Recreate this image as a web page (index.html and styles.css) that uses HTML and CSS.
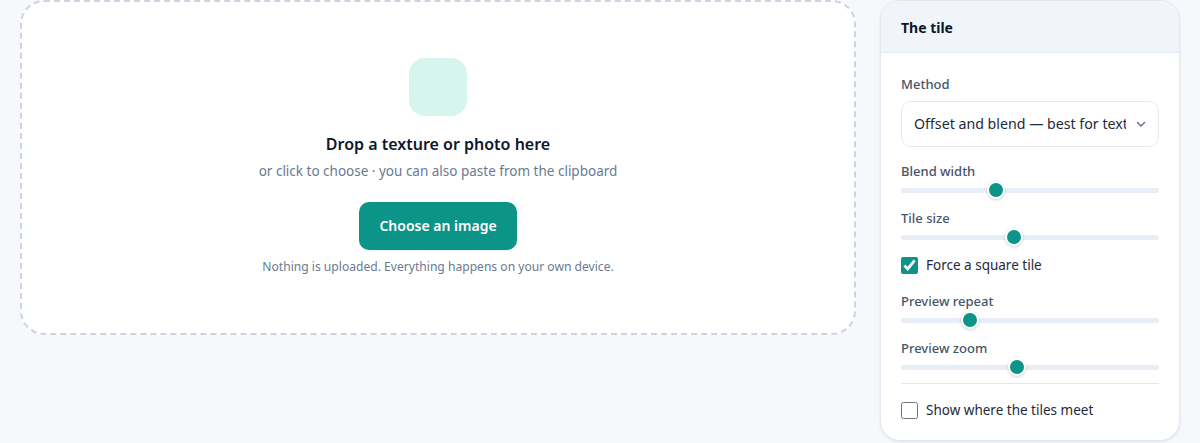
FILE: index.html
```html
<!DOCTYPE html>
<html lang="en">
<head>
<meta charset="utf-8">
<title>The tile</title>
<link rel="stylesheet" href="styles.css">
</head>
<body>
<main class="layout">
  <section class="drop">
    <div class="drop-icon"></div>
    <h2 class="drop-title">Drop a texture or photo here</h2>
    <p class="drop-sub">or click to choose · you can also paste from the clipboard</p>
    <button class="btn" type="button">Choose an image</button>
    <p class="drop-note">Nothing is uploaded. Everything happens on your own device.</p>
  </section>
  <aside class="panel">
    <header class="panel-head">The tile</header>
    <div class="panel-body">
      <div class="field method">
        <label class="label" for="m">Method</label>
        <div class="select-wrap">
          <select id="m" class="select"><option>Offset and blend — best for textures</option></select>
          <svg class="chev" viewBox="0 0 12 12" width="12" height="12" aria-hidden="true"><path d="M2.5 4.5 6 8l3.5-3.5" fill="none" stroke="#64748b" stroke-width="1.5" stroke-linecap="round" stroke-linejoin="round"/></svg>
        </div>
      </div>
      <div class="field">
        <label class="label">Blend width</label>
        <input class="range" type="range" min="0" max="1000" value="360">
      </div>
      <div class="field">
        <label class="label">Tile size</label>
        <input class="range" type="range" min="0" max="1000" value="432">
      </div>
      <label class="check check-gap"><input type="checkbox" checked><span>Force a square tile</span></label>
      <div class="field">
        <label class="label">Preview repeat</label>
        <input class="range" type="range" min="0" max="1000" value="250">
      </div>
      <div class="field last">
        <label class="label">Preview zoom</label>
        <input class="range" type="range" min="0" max="1000" value="446">
      </div>
      <hr class="rule">
      <label class="check"><input type="checkbox"><span>Show where the tiles meet</span></label>
    </div>
  </aside>
</main>
</body>
</html>
```
FILE: styles.css
```css
* { box-sizing: border-box; }
html, body { margin: 0; height: 100%; overflow: hidden; }
body {
  background: #f6f8fc;
  font-family: "Noto Sans", sans-serif;
  color: #0f172a;
}
.layout {
  display: grid;
  grid-template-columns: 1fr 300px;
  gap: 24px;
  padding: 0 20px;
  align-items: start;
}
.drop {
  height: 335px;
  background: #fff;
  border: 2px dashed #cbd5e1;
  border-radius: 24px;
  display: flex;
  flex-direction: column;
  align-items: center;
  padding-top: 56px;
}
.drop-icon {
  width: 58px;
  height: 58px;
  border-radius: 16px;
  background: #d5f5ee;
}
.drop-title {
  margin: 16px 0 0;
  font-size: 16px;
  line-height: 24px;
  font-weight: 600;
}
.drop-sub {
  margin: 6px 0 0;
  font-size: 13.5px;
  line-height: 18px;
  color: #6b7a90;
}
.btn {
  margin-top: 22px;
  width: 158px;
  height: 48px;
  padding: 0 0 2px;
  border: 0;
  border-radius: 10px;
  background: #0d9488;
  color: #fff;
  font: 600 14px "Noto Sans", sans-serif;
  box-shadow: 0 1px 2px rgba(15, 23, 42, .08);
}
.drop-note {
  margin: 8px 0 0;
  font-size: 12.1px;
  line-height: 17px;
  color: #6b7a90;
}
.panel {
  background: #fff;
  border: 1px solid #e2e8f0;
  border-radius: 20px;
  box-shadow: 0 1px 3px rgba(15, 23, 42, .08);
  overflow: hidden;
  height: 441px;
}
.panel-head {
  height: 52px;
  padding: 1px 20px 0;
  display: flex;
  align-items: center;
  background: #f1f5f9;
  border-bottom: 1px solid #e2e8f0;
  font-size: 14px;
  font-weight: 700;
}
.panel-body {
  padding: 22px 20px 0;
  display: flex;
  flex-direction: column;
}
.field { display: flex; flex-direction: column; margin-bottom: 10px; }
.field.method { margin-bottom: 15px; }
.field.last { margin-bottom: 7px; }
.label {
  font-size: 13px;
  line-height: 18px;
  font-weight: 500;
  color: #475569;
}
.method .label { margin-bottom: 8px; }
.select-wrap { position: relative; }
.select {
  display: block;
  width: 100%;
  height: 46px;
  padding: 0 32px 2px 12px;
  appearance: none;
  background: #fff;
  border: 1px solid #e2e8f0;
  border-radius: 10px;
  font: 14.2px "Noto Sans", sans-serif;
  color: #1e293b;
}
.chev { position: absolute; right: 12px; top: 17px; pointer-events: none; }
.range {
  appearance: none;
  display: block;
  width: 100%;
  height: 18px;
  margin: 1px 0 0;
  background: transparent;
}
.range::-webkit-slider-runnable-track {
  height: 5px;
  border-radius: 3px;
  background: #e8eef6;
}
.range::-webkit-slider-thumb {
  appearance: none;
  width: 18px;
  height: 18px;
  margin-top: -6.5px;
  border-radius: 50%;
  background: #0d9488;
  border: 2px solid #fff;
  box-shadow: 0 1px 3px rgba(15, 23, 42, .2);
}
.check {
  display: flex;
  align-items: center;
  gap: 8px;
  height: 18px;
  font-size: 13.5px;
  color: #1e293b;
}
.check input {
  width: 17px;
  height: 17px;
  margin: 0;
  accent-color: #0d9488;
}
.check-gap { margin-bottom: 18px; }
.rule {
  width: 100%;
  height: 1px;
  margin: 0 0 17px;
  border: 0;
  background: #e2e8f0;
}
```
